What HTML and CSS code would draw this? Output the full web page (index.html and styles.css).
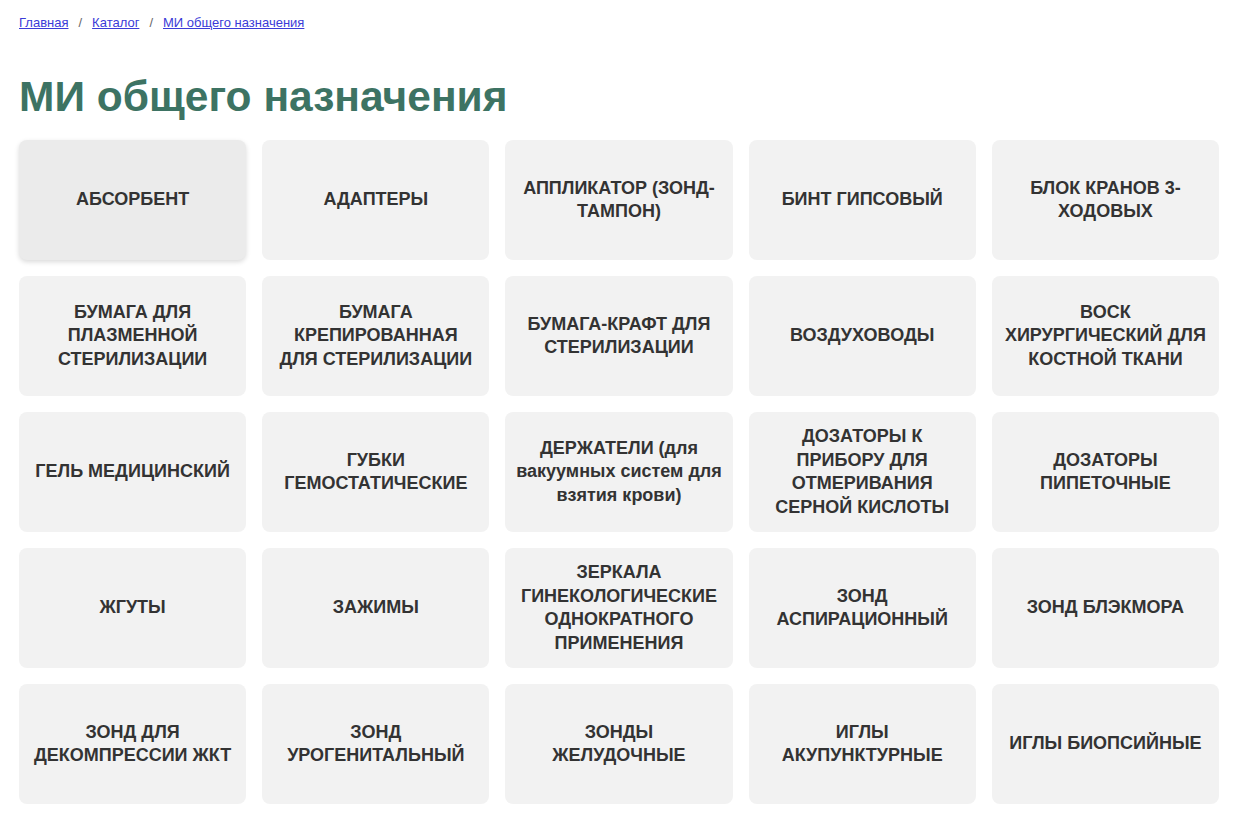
FILE: index.html
```html
<!DOCTYPE html>
<html lang="ru">
<head>
<meta charset="utf-8">
<title>МИ общего назначения</title>
<link rel="stylesheet" href="styles.css">
</head>
<body>
<div class="page">
  <nav class="crumbs">
    <a href="#">Главная</a><span class="sep">/</span><a href="#">Каталог</a><span class="sep">/</span><a href="#">МИ общего назначения</a>
  </nav>
  <h1 class="title">МИ общего назначения</h1>
  <div class="grid">
    <a class="card card-active" href="#">АБСОРБЕНТ</a>
    <a class="card" href="#">АДАПТЕРЫ</a>
    <a class="card" href="#">АППЛИКАТОР (ЗОНД-ТАМПОН)</a>
    <a class="card" href="#">БИНТ ГИПСОВЫЙ</a>
    <a class="card" href="#">БЛОК КРАНОВ 3-ХОДОВЫХ</a>
    <a class="card" href="#">БУМАГА ДЛЯ ПЛАЗМЕННОЙ СТЕРИЛИЗАЦИИ</a>
    <a class="card" href="#">БУМАГА КРЕПИРОВАННАЯ ДЛЯ СТЕРИЛИЗАЦИИ</a>
    <a class="card" href="#">БУМАГА-КРАФТ ДЛЯ СТЕРИЛИЗАЦИИ</a>
    <a class="card" href="#">ВОЗДУХОВОДЫ</a>
    <a class="card" href="#">ВОСК ХИРУРГИЧЕСКИЙ ДЛЯ КОСТНОЙ ТКАНИ</a>
    <a class="card" href="#">ГЕЛЬ МЕДИЦИНСКИЙ</a>
    <a class="card" href="#">ГУБКИ ГЕМОСТАТИЧЕСКИЕ</a>
    <a class="card" href="#">ДЕРЖАТЕЛИ (для вакуумных систем для взятия крови)</a>
    <a class="card" href="#">ДОЗАТОРЫ К ПРИБОРУ ДЛЯ ОТМЕРИВАНИЯ СЕРНОЙ КИСЛОТЫ</a>
    <a class="card" href="#">ДОЗАТОРЫ ПИПЕТОЧНЫЕ</a>
    <a class="card" href="#">ЖГУТЫ</a>
    <a class="card" href="#">ЗАЖИМЫ</a>
    <a class="card" href="#">ЗЕРКАЛА ГИНЕКОЛОГИЧЕСКИЕ ОДНОКРАТНОГО ПРИМЕНЕНИЯ</a>
    <a class="card" href="#">ЗОНД АСПИРАЦИОННЫЙ</a>
    <a class="card" href="#">ЗОНД БЛЭКМОРА</a>
    <a class="card" href="#">ЗОНД ДЛЯ ДЕКОМПРЕССИИ ЖКТ</a>
    <a class="card" href="#">ЗОНД УРОГЕНИТАЛЬНЫЙ</a>
    <a class="card" href="#">ЗОНДЫ ЖЕЛУДОЧНЫЕ</a>
    <a class="card" href="#">ИГЛЫ АКУПУНКТУРНЫЕ</a>
    <a class="card" href="#">ИГЛЫ БИОПСИЙНЫЕ</a>
  </div>
</div>
</body>
</html>
```
FILE: styles.css
```css
html, body {
  margin: 0;
  padding: 0;
  background: #ffffff;
}
body {
  font-family: "Liberation Sans", Arial, sans-serif;
  color: #333333;
}
.page {
  width: 1200px;
  margin: 0 0 0 19px;
  padding-top: 15px;
}
.crumbs {
  font-size: 13px;
  line-height: 16px;
  color: #666666;
}
.crumbs a {
  color: #3b3bd8;
  text-decoration: underline;
}
.crumbs .sep {
  margin: 0 10px;
  color: #666666;
}
.title {
  margin: 42px 0 0 0;
  font-size: 42.5px;
  line-height: 48px;
  font-weight: bold;
  color: #3d7363;
}
.grid {
  margin-top: 19px;
  display: grid;
  grid-template-columns: repeat(5, 1fr);
  grid-auto-rows: 120px;
  gap: 16px;
}
.card {
  display: flex;
  align-items: center;
  justify-content: center;
  text-align: center;
  padding: 0 10.3px;
  background: #f2f2f2;
  border-radius: 8px;
  color: #333333;
  text-decoration: none;
  font-size: 18px;
  font-weight: bold;
  line-height: 23.5px;
}
.card-active {
  background: #ebebeb;
  box-shadow: 0 2px 5px rgba(0, 0, 0, 0.15);
}
```
